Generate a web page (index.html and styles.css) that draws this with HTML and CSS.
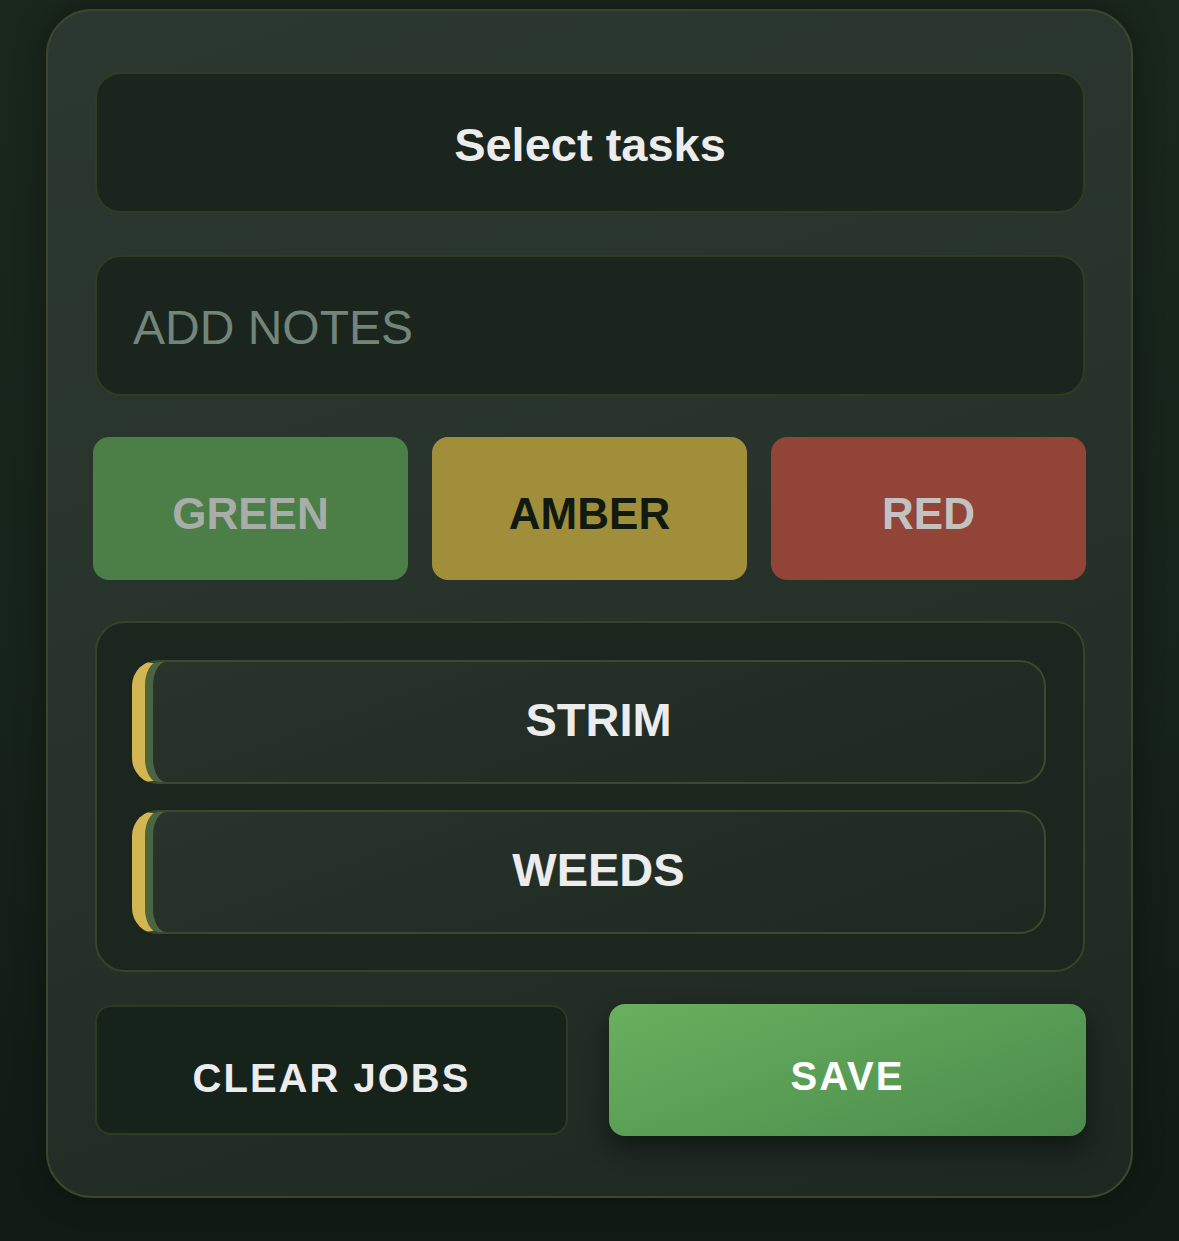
FILE: index.html
```html
<!DOCTYPE html>
<html lang="en">
<head>
<meta charset="utf-8">
<title>Select tasks</title>
<link rel="stylesheet" href="styles.css">
</head>
<body>
<main class="card">
  <div class="title-box">Select tasks</div>
  <div class="notes-box"><span class="placeholder">ADD NOTES</span></div>
  <div class="status-row">
    <button class="status status-green">GREEN</button>
    <button class="status status-amber">AMBER</button>
    <button class="status status-red">RED</button>
  </div>
  <div class="tasks">
    <div class="task">STRIM</div>
    <div class="task">WEEDS</div>
  </div>
  <div class="actions">
    <button class="btn btn-clear">CLEAR JOBS</button>
    <button class="btn btn-save">SAVE</button>
  </div>
</main>
</body>
</html>
```
FILE: styles.css
```css
* { box-sizing: border-box; }
html, body { height: 100%; }
body {
  margin: 0;
  background: linear-gradient(180deg, #19271c 0%, #16231a 55%, #111a14 100%);
  font-family: "Liberation Sans", Arial, sans-serif;
  padding-top: 9px;
}
.card {
  width: 1087px;
  margin: 0 auto;
  padding: 61px 46px 60px 47px;
  border: 2px solid #3a4630;
  border-radius: 46px;
  background: linear-gradient(160deg, #2b3830 0%, #27332b 45%, #1d2820 100%);
  box-shadow: 0 0 30px rgba(0, 0, 0, 0.35);
  display: flex;
  flex-direction: column;
}
.title-box, .notes-box {
  height: 141px;
  border: 2px solid #2f3b25;
  border-radius: 26px;
  background: #1a261d;
  display: flex;
  align-items: center;
}
.title-box {
  justify-content: center;
  color: #ececec;
  font-weight: 700;
  font-size: 47px;
  padding-top: 4px;
}
.notes-box {
  margin-top: 42px;
  padding: 4px 36px 0;
}
.placeholder {
  color: #738479;
  font-size: 48px;
}
.status-row {
  margin-top: 41px;
  display: grid;
  grid-template-columns: repeat(3, 1fr);
  gap: 24px;
  margin-left: -2px;
  margin-right: -1px;
}
.status {
  height: 143px;
  border: none;
  border-radius: 16px;
  font-family: "Liberation Sans", Arial, sans-serif;
  font-weight: 700;
  font-size: 44px;
  padding-top: 12px;
}
.status-green { background: #4c7e47; color: #a9ada9; }
.status-amber { background: #a08e3b; color: #101a10; }
.status-red { background: #924437; color: #c2c2c2; }
.tasks {
  margin-top: 41px;
  border: 2px solid #36432b;
  border-radius: 30px;
  background: #1b261e;
  padding: 37px 37px 36px 35px;
  display: flex;
  flex-direction: column;
  gap: 26px;
}
.task {
  height: 124px;
  border: 2px solid #3a4a2e;
  border-left: 13px solid #d3b552;
  border-radius: 26px;
  background: linear-gradient(160deg, #28342c 0%, #222d25 55%, #1e2a21 100%);
  box-shadow: inset 8px 0 0 #4a6540;
  display: flex;
  align-items: center;
  justify-content: center;
  color: #ececec;
  font-weight: 700;
  font-size: 47px;
  padding-left: 8px;
  padding-bottom: 5px;
}
.actions {
  margin-top: 33px;
  display: flex;
  gap: 41px;
}
.btn {
  height: 130px;
  border-radius: 16px;
  font-family: "Liberation Sans", Arial, sans-serif;
  font-weight: 700;
  font-size: 40px;
  letter-spacing: 2px;
  padding-top: 18px;
}
.btn-clear {
  width: 473px;
  background: #16231a;
  border: 2px solid #2f3a26;
  color: #ececec;
}
.btn-save {
  flex: 1;
  height: 132px;
  margin-top: -1px;
  margin-right: -1px;
  border: none;
  background: linear-gradient(160deg, #6aae5e 0%, #5a9e56 50%, #4b8a4b 100%);
  color: #ffffff;
  box-shadow: 0 12px 26px rgba(0, 0, 0, 0.45);
  padding-top: 14px;
}
```
